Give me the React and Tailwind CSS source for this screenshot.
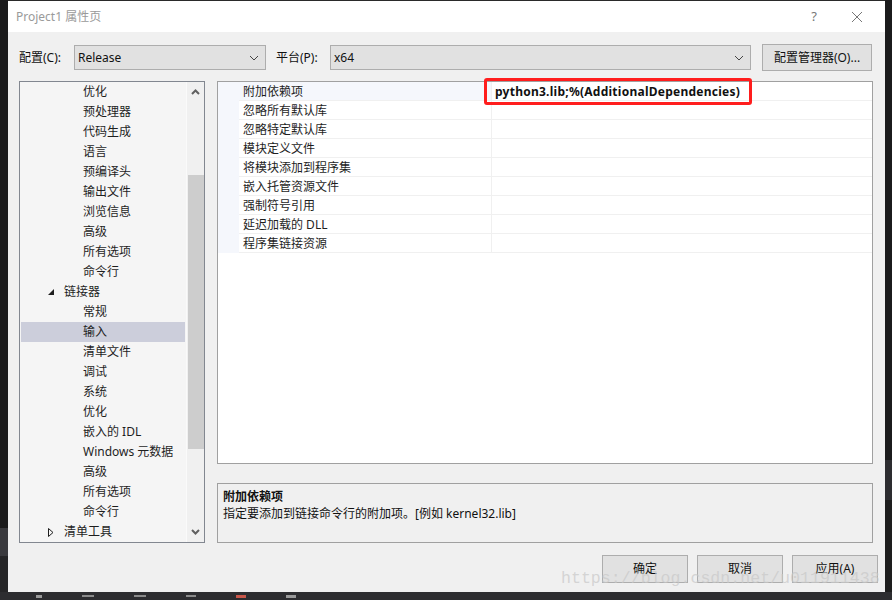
import React from "react";

const F = "font-['Noto_Sans','Noto_Sans_CJK_SC',sans-serif]";

const treeRows = [
  { t: "优化", lvl: 2 },
  { t: "预处理器", lvl: 2 },
  { t: "代码生成", lvl: 2 },
  { t: "语言", lvl: 2 },
  { t: "预编译头", lvl: 2 },
  { t: "输出文件", lvl: 2 },
  { t: "浏览信息", lvl: 2 },
  { t: "高级", lvl: 2 },
  { t: "所有选项", lvl: 2 },
  { t: "命令行", lvl: 2 },
  { t: "链接器", lvl: 1, open: true },
  { t: "常规", lvl: 2 },
  { t: "输入", lvl: 2, sel: true },
  { t: "清单文件", lvl: 2 },
  { t: "调试", lvl: 2 },
  { t: "系统", lvl: 2 },
  { t: "优化", lvl: 2 },
  { t: "嵌入的 IDL", lvl: 2 },
  { t: "Windows 元数据", lvl: 2 },
  { t: "高级", lvl: 2 },
  { t: "所有选项", lvl: 2 },
  { t: "命令行", lvl: 2 },
  { t: "清单工具", lvl: 1, open: false },
];

const props = [
  "附加依赖项",
  "忽略所有默认库",
  "忽略特定默认库",
  "模块定义文件",
  "将模块添加到程序集",
  "嵌入托管资源文件",
  "强制符号引用",
  "延迟加载的 DLL",
  "程序集链接资源",
];

function Chevron() {
  return (
    <svg width="10" height="6" viewBox="0 0 10 6" className="shrink-0">
      <path d="M1 1 L5 5 L9 1" fill="none" stroke="#444" strokeWidth="1" />
    </svg>
  );
}

function Select({ value, w }) {
  return (
    <div
      className={`h-[25px] ${w} border border-[#adadad] bg-[#e1e1e1] flex items-center justify-between pl-[3px] pr-[6px] text-[12px] text-[#111]`}
    >
      <span>{value}</span>
      <Chevron />
    </div>
  );
}

function Btn({ children }) {
  return (
    <div className="w-[86px] h-[28px] border border-[#adadad] bg-[#e1e1e1] flex items-center justify-center text-[12px] text-[#111]">
      {children}
    </div>
  );
}

export default function App() {
  return (
    <div className={`w-[892px] h-[600px] bg-[#1e1e1e] relative overflow-hidden flex ${F}`}>
      {/* left dark strip */}
      <div className="w-[8px] h-full flex flex-col">
        <div className="h-[528px] bg-[#1b1b1c]" />
        <div className="h-[28px] bg-[#3a3a3e]" />
        <div className="flex-1 bg-[#252527]" />
      </div>
      {/* dialog */}
      <div className="w-[877px] h-[592px] flex flex-col bg-[#f0f0f0] border-t border-[#2a2a2a]">
        {/* title bar */}
        <div className="h-[31px] bg-white flex items-center pl-[8px] pr-[18px] text-[12px]">
          <span className="text-[#9a9a9a]">Project1 属性页</span>
          <div className="flex-1" />
          <span className="text-[#777] text-[13px] mr-[34px]">?</span>
          <svg width="12" height="12" viewBox="0 0 12 12" className="mr-[4px]">
            <path d="M1 1 L11 11 M11 1 L1 11" stroke="#777" strokeWidth="1" />
          </svg>
        </div>
        {/* config row */}
        <div className="flex items-center pl-[11px] mt-[12px] h-[27px] text-[12px] text-[#111]">
          <span className="w-[55px]">配置(C):</span>
          <Select value="Release" w="w-[192px]" />
          <span className="ml-[10px] w-[54px]">平台(P):</span>
          <Select value="x64" w="w-[421px]" />
          <div className="ml-[11px] w-[110px] h-[27px] border border-[#adadad] bg-[#e1e1e1] flex items-center justify-center">
            配置管理器(O)...
          </div>
        </div>
        {/* main */}
        <div className="flex pl-[11px] mt-[10px]">
          {/* tree */}
          <div className="w-[186px] h-[462px] border border-[#828790] bg-[#f5f5f5] flex overflow-hidden">
            <div className="w-[166px] flex flex-col">
              {treeRows.map((r, i) => (
                <div
                  key={i}
                  className={`h-[20px] shrink-0 flex items-center text-[12px] text-[#1e1e1e] ${
                    r.sel ? "bg-[#cccedb] ml-[1px] mr-[1px]" : ""
                  }`}
                >
                  {r.lvl === 1 ? (
                    <div className="flex items-center pl-[28px]">
                      <div className="w-[16px] flex items-center">
                        {r.open ? (
                          <svg width="6" height="6" viewBox="0 0 6 6">
                            <path d="M6 0 L6 6 L0 6 Z" fill="#1e1e1e" />
                          </svg>
                        ) : (
                          <svg width="6" height="9" viewBox="0 0 6 9">
                            <path d="M0.5 0.5 L5 4.5 L0.5 8.5 Z" fill="none" stroke="#1e1e1e" strokeWidth="1" />
                          </svg>
                        )}
                      </div>
                      <span>{r.t}</span>
                    </div>
                  ) : (
                    <span className={r.sel ? "pl-[62px]" : "pl-[63px]"}>{r.t}</span>
                  )}
                </div>
              ))}
            </div>
            <div className="w-[18px] border-l border-[#fafafa] bg-[#f0f0f0] flex flex-col items-center">
              <svg width="9" height="6" viewBox="0 0 9 6" className="mt-[7px]">
                <path d="M1 5 L4.5 1.5 L8 5" fill="none" stroke="#606060" strokeWidth="2" />
              </svg>
              <div className="w-[16px] h-[274px] bg-[#cdcdcd] mt-[80px]" />
              <div className="flex-1" />
              <svg width="9" height="6" viewBox="0 0 9 6" className="mb-[7px]">
                <path d="M1 1 L4.5 4.5 L8 1" fill="none" stroke="#606060" strokeWidth="2" />
              </svg>
            </div>
          </div>
          {/* right column */}
          <div className="ml-[12px] flex flex-col">
            <div className="w-[656px] h-[383px] border border-[#a0a0a0] bg-white flex flex-col">
              {props.map((p, i) => (
                <div key={i} className="h-[19px] shrink-0 flex text-[12px] text-[#1e1e1e]">
                  <div className="w-[21px] bg-[#f5f7fc]" />
                  <div
                    className={`w-[252px] flex items-center pl-[4px] pt-[1px] border-b border-[#f0f0f0] ${
                      i === 0 ? "bg-[#f5f7fc]" : ""
                    }`}
                  >
                    {p}
                  </div>
                  <div className="flex-1 border-l border-b border-[#f0f0f0] flex items-center pl-[3px] pt-[1px]">
                    {i === 0 ? (
                      <span className="font-bold text-[#111] tracking-[0.25px]">
                        python3.lib;%(AdditionalDependencies)
                      </span>
                    ) : null}
                  </div>
                </div>
              ))}
            </div>
            <div className="w-[656px] h-[60px] mt-[19px] border border-[#a0a0a0] bg-[#f0f0f0] pl-[5px] pt-[4px] text-[12px] text-[#111] leading-[17px]">
              <div className="font-bold">附加依赖项</div>
              <div>指定要添加到链接命令行的附加项。[例如 kernel32.lib]</div>
            </div>
          </div>
        </div>
        {/* buttons */}
        <div className="flex pl-[594px] gap-[9px] mt-[12px]">
          <Btn>确定</Btn>
          <Btn>取消</Btn>
          <Btn>应用(A)</Btn>
        </div>
      </div>
      {/* right dark strip */}
      <div className="flex-1 h-full flex flex-col">
        <div className="h-[460px] bg-[#1b1b1c]" />
        <div className="h-[40px] bg-[#2d2d30]" />
        <div className="flex-1 bg-[#1e1e1e]" />
      </div>
      {/* bottom taskbar */}
      <div className="absolute left-0 right-0 top-[592px] h-[8px] bg-[#2d2d30] flex items-center pl-[36px] gap-[40px]">
        <div className="w-[6px] h-[3px] bg-[#9a9a9a]" />
        <div className="w-[12px] h-[2px] bg-[#8a8a8a]" />
        <div className="w-[12px] h-[2px] bg-[#8a8a8a]" />
        <div className="w-[10px] h-[2px] bg-[#8a8a8a]" />
        <div className="w-[10px] h-[3px] bg-[#c8574a]" />
        <div className="w-[10px] h-[3px] bg-[#9a9a9a]" />
      </div>
      {/* red highlight */}
      <div className="absolute left-[484px] top-[78px] w-[268px] h-[27px] border-[3px] border-[#ff1d1d] rounded-[3px]" />
      {/* watermark */}
      <div className="absolute left-[561px] top-[567px] text-[16.6px] leading-[24px] text-[#c8c8c8]/70 font-['Liberation_Mono',monospace] whitespace-nowrap">
        https://blog.csdn.net/u011911438
      </div>
    </div>
  );
}
